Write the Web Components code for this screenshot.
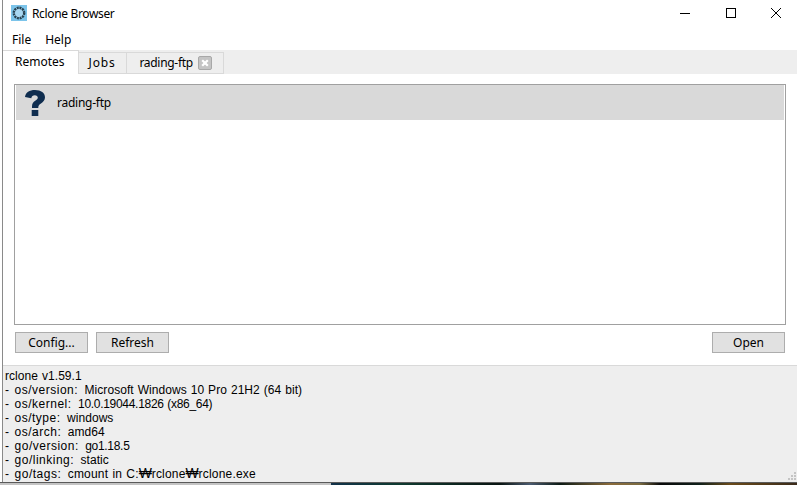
<!DOCTYPE html>
<html>
<head>
<meta charset="utf-8">
<style>
    html, body { margin: 0; background: #fff; }
    body { font: 12px "Noto Sans", "Noto Sans CJK KR", sans-serif; color: #000; overflow: hidden; }
    .dash { margin-right: 1.5px; }
    .key { margin-right: 2.5px; letter-spacing: .5px; }
    .num { letter-spacing: -.3px; }
    .path { letter-spacing: .2px; }
</style>
</head>
<body>
<app-window>
    <title-bar slot="title">Rclone Browser</title-bar>
    <menu-bar slot="menu"><span>File</span><span>Help</span></menu-bar>
    <tab-strip slot="tabs">
        <tab-item active>Remotes</tab-item>
        <tab-item class="jobs">Jobs</tab-item>
        <tab-item closable>rading-ftp</tab-item>
    </tab-strip>
    <remote-list slot="list">
        <remote-row>rading-ftp</remote-row>
    </remote-list>
    <action-bar slot="actions">
        <push-button>Config...</push-button>
        <push-button>Refresh</push-button>
        <push-button slot="end">Open</push-button>
    </action-bar>
    <status-log slot="status">
        <div>rclone v1.59.1</div>
        <div><span class="dash">-</span> <span class="key">os/version:</span> Microsoft Windows 10 Pro 21H2 (64 bit)</div>
        <div><span class="dash">-</span> <span class="key">os/kernel:</span> <span class="num">10.0.19044.1826 (x86_64)</span></div>
        <div><span class="dash">-</span> <span class="key">os/type:</span> windows</div>
        <div><span class="dash">-</span> <span class="key">os/arch:</span> amd64</div>
        <div><span class="dash">-</span> <span class="key">go/version:</span> <span class="num">go1.18.5</span></div>
        <div><span class="dash">-</span> <span class="key">go/linking:</span> static</div>
        <div><span class="dash">-</span> <span class="key">go/tags:</span> <span class="path">cmount in C:<won-sign>₩</won-sign>rclone<won-sign>₩</won-sign>rclone.exe</span></div>
    </status-log>
</app-window>
<script>
class AppWindow extends HTMLElement {
    constructor() {
        super();
        this.attachShadow({ mode: "open" });
        this.shadowRoot.innerHTML = `
            <style>
                :host { display: flex; flex-direction: column; width: 797px; height: 485px; }
                .frame { flex: none; height: 482px; box-sizing: border-box; margin-left: 2px; border-left: 1px solid #8a8a8a; display: flex; flex-direction: column; background: #fff; }
                .pane { flex: none; height: 292px; box-sizing: border-box; border-top: 1px solid #d9d9d9; margin-top: -1px; padding: 10px 11px 0 11px; display: flex; flex-direction: column; }
                .desk { flex: none; height: 3px; border-top: 1px solid #5a5a5a; box-sizing: border-box; background: linear-gradient(90deg, #c4c4c4 0, #c4c4c4 331px, #12324a 331px, #0f3a30 400px, #0a1512 500px, #4a5a70 530px, #0c1a14 560px, #8a6a3a 610px, #7a6a40 640px, #0a0a0a 660px, #10201a 700px, #6a4a1a 730px, #3a2a1a 797px); }
            </style>
            <div class="frame">
                <slot name="title"></slot>
                <slot name="menu"></slot>
                <slot name="tabs"></slot>
                <div class="pane">
                    <slot name="list"></slot>
                    <slot name="actions"></slot>
                </div>
                <slot name="status"></slot>
            </div>
            <div class="desk"></div>
        `;
    }
}

class TitleBar extends HTMLElement {
    constructor() {
        super();
        this.attachShadow({ mode: "open" });
        this.shadowRoot.innerHTML = `
            <style>
                :host { display: flex; align-items: center; height: 30px; padding-left: 8px; margin-right: -2px; box-sizing: border-box; }
                .logo { width: 16px; height: 16px; margin-right: 5px; margin-top: -4px; }
                .name { flex: 1; margin-top: -4px; letter-spacing: -.35px; }
                .ctl { width: 45.5px; height: 30px; display: flex; align-items: center; justify-content: center; }
                .ctl svg { margin-top: -4px; }
            </style>
            <svg class="logo" viewBox="0 0 16 16">
                <rect width="16" height="16" fill="#7cc4ea"></rect>
                <circle cx="8" cy="8" r="5.2" fill="#a9d8f2" stroke="#27404f" stroke-width="2.4" stroke-dasharray="2 .7"></circle>
            </svg>
            <span class="name"><slot></slot></span>
            <div class="ctl"><svg width="10" height="10" viewBox="0 0 10 10"><path d="M0 5.500H10" stroke="#000" fill="none"></path></svg></div>
            <div class="ctl"><svg width="10" height="10" viewBox="0 0 10 10"><rect x=".5" y=".5" width="9" height="9" stroke="#000" fill="none"></rect></svg></div>
            <div class="ctl"><svg width="10" height="10" viewBox="0 0 10 10"><path d="M0 0L10 10M10 0L0 10" stroke="#000" fill="none"></path></svg></div>
        `;
    }
}

class MenuBar extends HTMLElement {
    constructor() {
        super();
        this.attachShadow({ mode: "open" });
        this.shadowRoot.innerHTML = `
            <style>
                :host { display: flex; gap: 14px; height: 20px; padding: 0 0 2px 9px; align-items: center; box-sizing: border-box; }
            </style>
            <slot></slot>
        `;
    }
}

class TabStrip extends HTMLElement {
    constructor() {
        super();
        this.attachShadow({ mode: "open" });
        this.shadowRoot.innerHTML = `
            <style>
                :host { display: flex; align-items: flex-end; height: 24px; background: #eee; box-sizing: border-box; position: relative; z-index: 1; }
            </style>
            <slot></slot>
        `;
    }
}

class TabItem extends HTMLElement {
    constructor() {
        super();
        this.attachShadow({ mode: "open" });
        const closable = this.hasAttribute("closable");
        this.shadowRoot.innerHTML = `
            <style>
                :host { display: flex; align-items: center; height: 22px; box-sizing: border-box; padding: 0 11px 1px 12px; background: #eee; border: 1px solid #d9d9d9; border-left: 0; letter-spacing: -.3px; }
                :host([active]) { height: 24px; background: #fff; border-bottom: 0; padding: 0 13px 3px 12px; letter-spacing: 0; }
                :host(.jobs) { padding-left: 10px; letter-spacing: .8px; }
                svg { margin-left: 5px; }
            </style>
            <slot></slot>
            ${closable ? `<svg width="14" height="14" viewBox="0 0 14 14">
                <rect x=".5" y=".5" width="13" height="13" rx="1.5" fill="#c4c4c4" stroke="#a8a8a8"></rect>
                <path d="M4.200 4.200L9.800 9.800M9.800 4.200L4.200 9.800" stroke="#fff" stroke-width="2.2" fill="none"></path>
            </svg>` : ""}
        `;
    }
}

class RemoteList extends HTMLElement {
    constructor() {
        super();
        this.attachShadow({ mode: "open" });
        this.shadowRoot.innerHTML = `
            <style>
                :host { display: block; height: 241px; box-sizing: border-box; border: 1px solid #a0a0a0; padding: 0 1px; background: #fff; }
            </style>
            <slot></slot>
        `;
    }
}

class RemoteRow extends HTMLElement {
    constructor() {
        super();
        this.attachShadow({ mode: "open" });
        this.shadowRoot.innerHTML = `
            <style>
                :host { display: flex; align-items: center; height: 35px; background: #d9d9d9; padding-left: 9px; letter-spacing: -.25px; }
                svg { margin-right: 12px; }
            </style>
            <svg width="20" height="26" viewBox="0 0 20 26">
                <path fill="#0f2d4f" d="M0 7C.6 2.600 4.400 0 10 0c6 0 10 3 10 7.200 0 3-1.700 4.600-4 6.200-1.800 1.200-2.700 2-2.700 4v.6H7v-1.400c0-3 1.200-4.400 3.200-5.800 1.600-1.100 2.600-1.900 2.600-3.200 0-1.500-1.200-2.400-3-2.400-2 0-3.200 1-3.500 3L0 7zM6.700 20h6.600v6H6.700z"></path>
            </svg>
            <slot></slot>
        `;
    }
}

class ActionBar extends HTMLElement {
    constructor() {
        super();
        this.attachShadow({ mode: "open" });
        this.shadowRoot.innerHTML = `
            <style>
                :host { display: flex; gap: 8px; height: 40px; padding: 7px 1px 0 1px; box-sizing: border-box; }
                .end { margin-left: auto; }
            </style>
            <slot></slot>
            <div class="end"><slot name="end"></slot></div>
        `;
    }
}

class PushButton extends HTMLElement {
    constructor() {
        super();
        this.attachShadow({ mode: "open" });
        this.shadowRoot.innerHTML = `
            <style>
                :host { display: flex; width: 73px; height: 21px; box-sizing: border-box; align-items: center; justify-content: center; background: #e1e1e1; border: 1px solid #adadad; }
            </style>
            <slot></slot>
        `;
    }
}

class StatusLog extends HTMLElement {
    constructor() {
        super();
        this.attachShadow({ mode: "open" });
        this.shadowRoot.innerHTML = `
            <style>
                :host { display: block; flex: 1; position: relative; background: #eee; border-top: 1px solid #d9d9d9; padding: 3px 0 0 2px; font-family: "Liberation Sans", sans-serif; line-height: 14px; letter-spacing: .05px; word-spacing: .6px; box-sizing: border-box; }
                .grip { position: absolute; right: 1px; bottom: 2px; }
            </style>
            <slot></slot>
            <svg class="grip" width="8" height="8" viewBox="0 0 8 8" fill="#c4c4c4">
                <rect x="6" y="0" width="2" height="2"></rect>
                <rect x="3" y="3" width="2" height="2"></rect><rect x="6" y="3" width="2" height="2"></rect>
                <rect x="0" y="6" width="2" height="2"></rect><rect x="3" y="6" width="2" height="2"></rect><rect x="6" y="6" width="2" height="2"></rect>
            </svg>
        `;
    }
}

class WonSign extends HTMLElement {
    constructor() {
        super();
        this.attachShadow({ mode: "open" });
        this.shadowRoot.innerHTML = `
            <style>
                :host { display: inline-block; width: 13px; text-align: center; letter-spacing: 0; font-size: 14px; line-height: 12px; }
            </style>
            <slot></slot>
        `;
    }
}

customElements.define("app-window", AppWindow);
customElements.define("title-bar", TitleBar);
customElements.define("menu-bar", MenuBar);
customElements.define("tab-strip", TabStrip);
customElements.define("tab-item", TabItem);
customElements.define("remote-list", RemoteList);
customElements.define("remote-row", RemoteRow);
customElements.define("action-bar", ActionBar);
customElements.define("push-button", PushButton);
customElements.define("status-log", StatusLog);
customElements.define("won-sign", WonSign);
</script>
</body>
</html>
